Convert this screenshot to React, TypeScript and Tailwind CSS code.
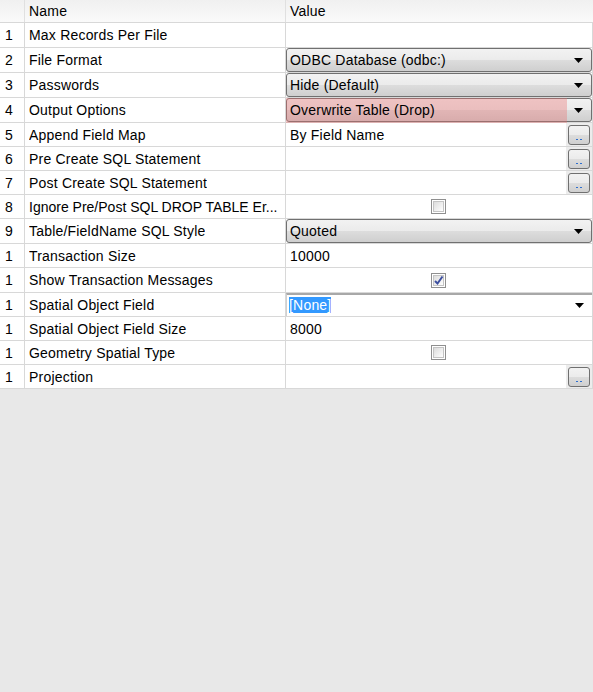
import React from "react";

type Kind = "text" | "combo" | "comboErr" | "button" | "check" | "checked" | "select";

interface Row {
  n: string;
  name: string;
  value?: string;
  kind: Kind;
  h: string;
  tight?: boolean;
}

const rows: Row[] = [
  { n: "1", name: "Max Records Per File", kind: "text", h: "h-[25px]" },
  { n: "2", name: "File Format", value: "ODBC Database (odbc:)", kind: "combo", h: "h-[25px]" },
  { n: "3", name: "Passwords", value: "Hide (Default)", kind: "combo", h: "h-[25px]" },
  { n: "4", name: "Output Options", value: "Overwrite Table (Drop)", kind: "comboErr", h: "h-[25px]" },
  { n: "5", name: "Append Field Map", value: "By Field Name", kind: "button", h: "h-[24px]" },
  { n: "6", name: "Pre Create SQL Statement", kind: "button", h: "h-[24px]" },
  { n: "7", name: "Post Create SQL Statement", kind: "button", h: "h-[24px]" },
  { n: "8", name: "Ignore Pre/Post SQL DROP TABLE Er...", kind: "check", h: "h-[24px]", tight: true },
  { n: "9", name: "Table/FieldName SQL Style", value: "Quoted", kind: "combo", h: "h-[25px]" },
  { n: "1", name: "Transaction Size", value: "10000", kind: "text", h: "h-[24px]" },
  { n: "1", name: "Show Transaction Messages", kind: "checked", h: "h-[25px]" },
  { n: "1", name: "Spatial Object Field", value: "[None]", kind: "select", h: "h-[24px]" },
  { n: "1", name: "Spatial Object Field Size", value: "8000", kind: "text", h: "h-[24px]" },
  { n: "1", name: "Geometry Spatial Type", kind: "check", h: "h-[24px]" },
  { n: "1", name: "Projection", kind: "button", h: "h-[24px]" },
];

function Arrow() {
  return (
    <svg width="9" height="5" viewBox="0 0 9 5" className="relative z-10 shrink-0">
      <path d="M0 0 H9 L4.5 5 Z" fill="#000" />
    </svg>
  );
}

function Combo({ value, err }: { value?: string; err?: boolean }) {
  return (
    <div className="relative flex h-full w-full items-center rounded-[3px] border border-[#707070] bg-[linear-gradient(#f2f2f2_0%,#ebebeb_50%,#dddddd_50%,#cfcfcf_100%)] pl-[3px] pr-[8px] pt-[1px]">
      {err && (
        <div className="absolute left-[-1px] top-[-1px] bottom-[-2px] w-[281px] bg-[rgba(232,110,110,0.36)]" />
      )}
      <span className="relative z-10 flex-1 truncate">{value}</span>
      <Arrow />
    </div>
  );
}

function EllipsisButton() {
  return (
    <div className="flex h-full w-[26px] shrink-0 items-center justify-center bg-[#ececec]">
      <div className="relative h-[20px] w-[22px] rounded-[3px] border border-[#707070] bg-[linear-gradient(#f2f2f2_0%,#ebebeb_50%,#dddddd_50%,#cfcfcf_100%)]">
        <div className="absolute bottom-[4px] left-[7px] flex gap-[2px]">
          <div className="h-[1px] w-[2px] bg-[#2d6fd0]" />
          <div className="h-[1px] w-[2px] bg-[#2d6fd0]" />
        </div>
      </div>
    </div>
  );
}

function Checkbox({ checked }: { checked?: boolean }) {
  return (
    <div className="flex h-[15px] w-[15px] items-center justify-center border border-[#8f8f8f] bg-white p-[1px]">
      <div className="relative h-full w-full border border-[#c4c4c4] bg-[linear-gradient(135deg,#dcdcdc_0%,#f4f4f4_70%,#ffffff_100%)]">
        {checked && (
          <svg width="11" height="11" viewBox="0 0 11 11" className="absolute left-[-1px] top-[-1px]">
            <path d="M2 6 L4.5 8.5 L9.5 1.5" stroke="#3d4f9f" strokeWidth="2" fill="none" />
          </svg>
        )}
      </div>
    </div>
  );
}

function Value({ r }: { r: Row }) {
  switch (r.kind) {
    case "combo":
      return <Combo value={r.value} />;
    case "comboErr":
      return <Combo value={r.value} err />;
    case "button":
      return (
        <div className="flex h-full w-full items-center">
          <span className="flex-1 truncate pl-[4px] pt-[1px]">{r.value}</span>
          <EllipsisButton />
        </div>
      );
    case "check":
    case "checked":
      return (
        <div className="flex h-full w-full items-center justify-center pr-[2px]">
          <Checkbox checked={r.kind === "checked"} />
        </div>
      );
    case "select":
      return (
        <div className="flex h-full w-full items-center border-t-2 border-l border-t-[#a8a8a8] border-l-[#d0d0d0] pl-[2px] pr-[8px]">
          <span className="flex-1">
            <span className="bg-[#3399ff] text-white">{r.value}</span>
          </span>
          <Arrow />
        </div>
      );
    default:
      return <span className="truncate pl-[4px] pt-[1px]">{r.value}</span>;
  }
}

export default function App() {
  return (
    <div className="h-[692px] w-[593px] bg-[#e8e8e8] text-[14px] tracking-[0.2px] text-black [font-family:'Liberation_Sans',Arial,sans-serif]">
      <div className="w-[593px] bg-white">
        <div className="flex h-[23px] border-b border-[#d8d8d8] bg-[linear-gradient(#f0f0f0,#fafafa)]">
          <div className="w-[25px] shrink-0 border-r border-[#e0e0e0]" />
          <div className="flex w-[261px] shrink-0 items-center border-r border-[#e0e0e0] pl-[4px] pt-[1px]">Name</div>
          <div className="flex flex-1 items-center pl-[4px] pt-[1px]">Value</div>
        </div>
        {rows.map((r, i) => (
          <div key={i} className={`flex ${r.h} border-b border-[#d8d8d8]`}>
            <div className="flex w-[25px] shrink-0 items-center border-r border-[#d8d8d8] pl-[5px] pt-[1px]">{r.n}</div>
            <div className="flex w-[261px] shrink-0 items-center overflow-hidden border-r border-[#d8d8d8] pl-[4px] pt-[1px]">
              <span className={r.tight ? "whitespace-nowrap tracking-[0px]" : "truncate"}>{r.name}</span>
            </div>
            <div className="flex min-w-0 flex-1 items-center border-r border-[#d8d8d8]">
              <Value r={r} />
            </div>
          </div>
        ))}
      </div>
    </div>
  );
}
